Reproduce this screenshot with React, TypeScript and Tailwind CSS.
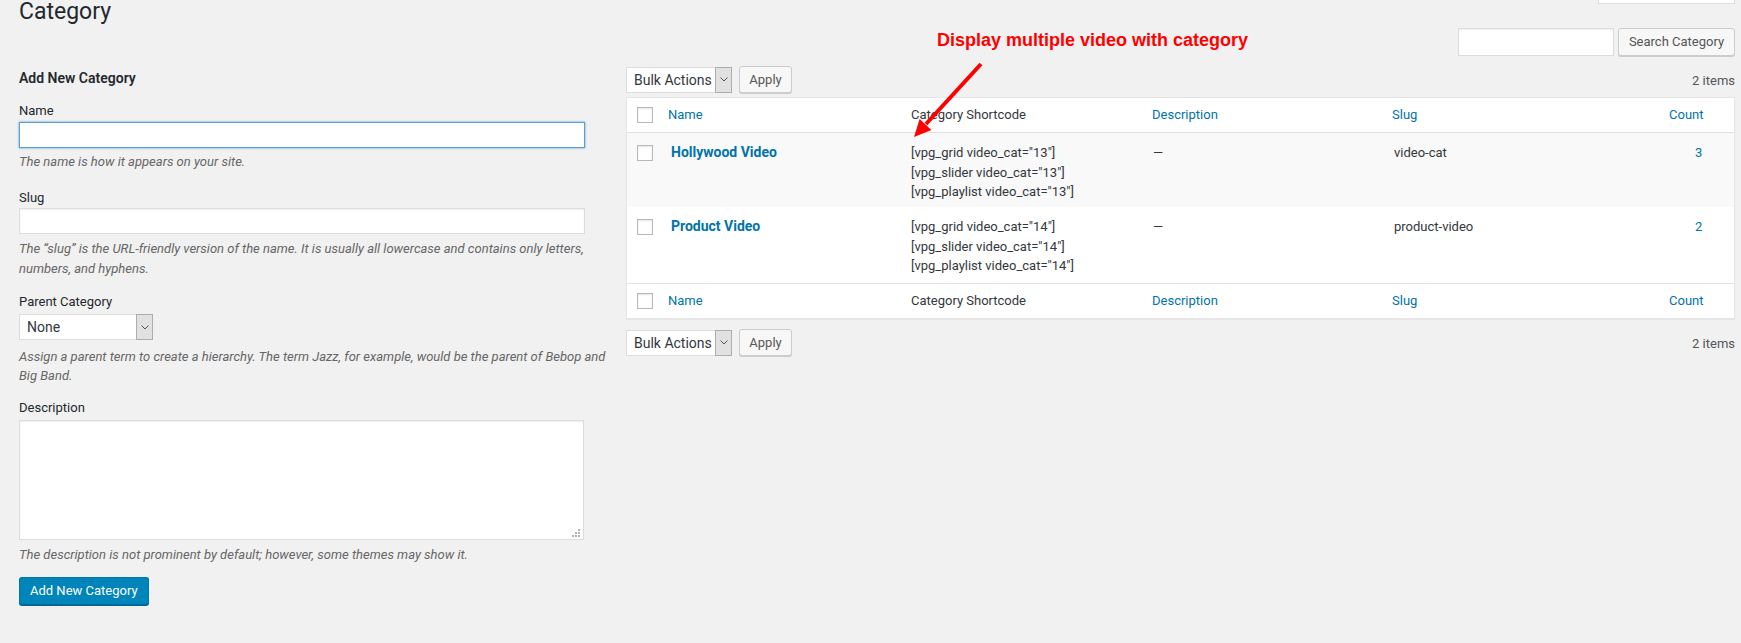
import React from "react";

const rows = [
  { name: "Hollywood Video", id: "13", slug: "video-cat", count: 3, bg: "bg-[#f9f9f9]", h: "h-[74px]" },
  { name: "Product Video", id: "14", slug: "product-video", count: 2, bg: "bg-white", h: "h-[76px]" },
];

const Checkbox = () => (
  <div className="w-[16px] h-[16px] border border-[#b4b9be] bg-white shadow-[inset_0_1px_2px_rgba(0,0,0,0.1)]" />
);

const Chevron = () => (
  <svg width="8" height="5" viewBox="0 0 8 5" fill="none">
    <path d="M0.5 0.5L4 4L7.5 0.5" stroke="#555" strokeWidth="1" />
  </svg>
);

const FakeSelect = ({ label, width }: { label: string; width: string }) => (
  <div className={`flex h-[26px] ${width}`}>
    <div className="flex-1 flex items-center pl-[7px] pt-[1px] bg-white border border-r-0 border-[#ddd] text-[14px] text-[#32373c]">
      {label}
    </div>
    <div className="w-[17px] flex items-center justify-center bg-[#e1e1e1] border border-[#adadad]">
      <Chevron />
    </div>
  </div>
);

const GreyButton = ({ children, className }: { children: React.ReactNode; className: string }) => (
  <button
    className={`flex items-center justify-center rounded-[3px] border border-[#ccc] bg-[#f7f7f7] text-[13px] text-[#555] shadow-[0_1px_0_#ccc] ${className}`}
  >
    {children}
  </button>
);

const TableNav = () => (
  <div className="flex items-center h-[27px]">
    <FakeSelect label="Bulk Actions" width="w-[106px]" />
    <GreyButton className="ml-[7px] w-[53px] h-[27px]">Apply</GreyButton>
    <div className="flex-1" />
    <span className="text-[13px] text-[#555] pt-[2px]">2 items</span>
  </div>
);

const HeadRow = ({ top }: { top: boolean }) => (
  <div
    className={`grid grid-cols-[41px_243px_241px_240px_268px_74px] h-[35px] items-center text-[13px] ${
      top ? "border-b border-[#e1e1e1]" : "border-t border-[#e1e1e1]"
    }`}
  >
    <div className="pl-[10px]">
      <Checkbox />
    </div>
    <div className="text-[#0073aa]">Name</div>
    <div className="text-[#32373c]">Category Shortcode</div>
    <div className="text-[#0073aa]">Description</div>
    <div className="text-[#0073aa]">Slug</div>
    <div className="pl-[9px] text-[#0073aa]">Count</div>
  </div>
);

export default function App() {
  return (
    <div className="relative w-full h-[643px] overflow-hidden bg-[#f1f1f1] pl-[19px] pr-[6px] font-[family-name:Roboto,sans-serif] text-[13px] text-[#444]">
      {/* title row */}
      <div className="flex justify-between items-start h-[28px]">
        <h1 className="text-[23px] leading-[23px] text-[#23282d]">Category</h1>
        <div className="w-[137px] h-[4px] bg-white border-x border-b border-[#ddd]" />
      </div>

      <div className="flex items-start">
        {/* Left: add form */}
        <div className="w-[596px] flex flex-col pt-[40px]">
          <h2 className="text-[14px] leading-[20px] font-semibold text-[#23282d]">Add New Category</h2>

          <label className="mt-[13px] leading-[20px] text-[#23282d]">Name</label>
          <input className="mt-[1px] w-[566px] h-[26px] bg-white border border-[#5b9dd9] shadow-[0_0_2px_rgba(30,140,190,0.8)] outline-none" />
          <p className="mt-[4px] leading-[20px] italic text-[#666]">The name is how it appears on your site.</p>

          <label className="mt-[16px] leading-[20px] text-[#23282d]">Slug</label>
          <input className="w-[566px] h-[26px] bg-white border border-[#ddd] shadow-[inset_0_1px_2px_rgba(0,0,0,0.07)] outline-none" />
          <p className="mt-[5px] leading-[20px] italic text-[#666] whitespace-nowrap">
            The “slug” is the URL-friendly version of the name. It is usually all lowercase and contains only letters,
            <br />
            numbers, and hyphens.
          </p>

          <label className="mt-[13px] leading-[20px] text-[#23282d]">Parent Category</label>
          <div className="mt-[2px]">
            <FakeSelect label="None" width="w-[134px]" />
          </div>
          <p className="mt-[7px] leading-[19px] italic text-[#666] whitespace-nowrap">
            Assign a parent term to create a hierarchy. The term Jazz, for example, would be the parent of Bebop and
            <br />
            Big Band.
          </p>

          <label className="mt-[13px] leading-[20px] text-[#23282d]">Description</label>
          <div className="relative mt-[2px] w-[565px] h-[120px]">
            <textarea className="w-full h-full resize-none bg-white border border-[#ddd] shadow-[inset_0_1px_2px_rgba(0,0,0,0.07)] outline-none" />
            <svg className="absolute right-[3px] bottom-[2px]" width="9" height="9" viewBox="0 0 9 9">
              <rect x="6" y="0" width="2" height="2" fill="#b0b0b0" />
              <rect x="3" y="3" width="2" height="2" fill="#b0b0b0" />
              <rect x="6" y="3" width="2" height="2" fill="#b0b0b0" />
              <rect x="0" y="6" width="2" height="2" fill="#b0b0b0" />
              <rect x="3" y="6" width="2" height="2" fill="#b0b0b0" />
              <rect x="6" y="6" width="2" height="2" fill="#b0b0b0" />
            </svg>
          </div>
          <p className="mt-[5px] leading-[20px] italic text-[#666]">
            The description is not prominent by default; however, some themes may show it.
          </p>

          <div className="mt-[12px]">
            <button className="h-[28px] px-[10px] rounded-[3px] bg-[#0085ba] border border-[#0073aa] border-b-[#006799] shadow-[0_1px_0_#006799] text-white text-[13px]">
              Add New Category
            </button>
          </div>
        </div>

        {/* Right: list */}
        <div className="ml-[11px] flex-1 flex flex-col">
          <div className="flex justify-end items-start h-[29px]">
            <input className="w-[156px] h-[28px] bg-white border border-[#ddd] shadow-[inset_0_1px_2px_rgba(0,0,0,0.07)] outline-none" />
            <GreyButton className="ml-[4px] w-[117px] h-[28px]">Search Category</GreyButton>
          </div>

          <div className="mt-[9px]">
            <TableNav />
          </div>

          <div className="mt-[4px] bg-white border border-[#e5e5e5] shadow-[0_1px_1px_rgba(0,0,0,0.04)]">
            <HeadRow top />
            {rows.map((r) => (
              <div
                key={r.id}
                className={`grid grid-cols-[41px_243px_241px_240px_268px_74px] items-start pt-[10px] leading-[19.5px] text-[#32373c] ${r.bg} ${r.h}`}
              >
                <div className="pl-[10px] pt-[2px]">
                  <Checkbox />
                </div>
                <div className="pl-[3px] text-[14px] font-bold text-[#0073aa]">{r.name}</div>
                <div>
                  <div>[vpg_grid video_cat="{r.id}"]</div>
                  <div>[vpg_slider video_cat="{r.id}"]</div>
                  <div>[vpg_playlist video_cat="{r.id}"]</div>
                </div>
                <div className="pl-[1px]">—</div>
                <div className="pl-[2px]">{r.slug}</div>
                <div className="pl-[35px] text-[#0073aa]">{r.count}</div>
              </div>
            ))}
            <HeadRow top={false} />
          </div>

          <div className="mt-[10px]">
            <TableNav />
          </div>
        </div>
      </div>

      {/* annotation */}
      <div className="absolute left-[937px] top-[31px] whitespace-nowrap text-[18px] leading-[18px] font-bold text-[#ff0000] font-[family-name:'Liberation_Sans',Arial,sans-serif]">
        Display multiple video with category
      </div>
      <svg className="absolute left-[900px] top-[55px] pointer-events-none" width="90" height="90" viewBox="900 55 90 90">
        <line x1="981" y1="64" x2="926" y2="124" stroke="#ff0000" strokeWidth="4" />
        <polygon points="914,137 931.4,129.9 919.6,119.1" fill="#ff0000" />
      </svg>
    </div>
  );
}
